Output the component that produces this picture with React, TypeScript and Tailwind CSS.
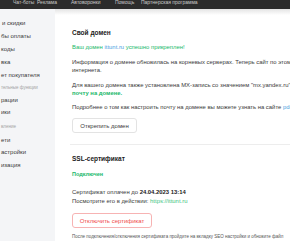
import React from 'react';

const topLinks = [
  { label: 'Чат-боты', w: 'w-[24px]' },
  { label: 'Реклама', w: 'w-[34px]' },
  { label: 'Автоворонки', w: 'w-[44px]' },
  { label: 'Помощь', w: 'w-[26px]' },
  { label: 'Партнерская программа', w: 'w-[80px]' },
];

// sidebar rows: fixed-height rows keep the rhythm of the scrolled menu
const SideItem: React.FC<{ label: string; h: string }> = ({ label, h }) => (
  <div className={`${h} flex items-center text-[6px] leading-[8px] text-[#3a3a3a] whitespace-nowrap`}>{label}</div>
);

const SideHeader: React.FC<{ label: string; h: string }> = ({ label, h }) => (
  <div className={`${h} flex items-center text-[4.5px] leading-[6px] text-[#a3a3a3] whitespace-nowrap`}>{label}</div>
);

export default function App() {
  return (
    <div className="w-[290px] h-[241px] overflow-hidden bg-white flex flex-col font-['Liberation_Sans',Arial,sans-serif]">
      {/* top nav, scrolled so only the bottom of it shows */}
      <div className="h-[9px] shrink-0 bg-[#2c2c2c] flex pl-[13px] overflow-hidden">
        {topLinks.map((l) => (
          <span key={l.label} className={`${l.w} shrink-0 -mt-[1px] text-[5px] leading-[6px] text-[#c9c9c9] whitespace-nowrap`}>
            {l.label}
          </span>
        ))}
      </div>

      <div className="flex flex-1 min-h-0">
        {/* sidebar */}
        <aside className="w-[55px] shrink-0 bg-[#f4f5f7] pl-[1px] overflow-hidden flex flex-col">
          <div className="h-[7px] shrink-0" />
          <SideItem label="и скидки" h="h-[13px] pl-[1px]" />
          <SideItem label="бы оплаты" h="h-[13px]" />
          <SideItem label="коды" h="h-[13px]" />
          <SideItem label="вка" h="h-[13px]" />
          <SideItem label="ет покупателя" h="h-[13px]" />
          <SideHeader label="тельные функции" h="h-[13px]" />
          <SideItem label="рации" h="h-[11px]" />
          <SideItem label="ики" h="h-[14px]" />
          <SideHeader label="вление" h="h-[16px]" />
          <SideItem label="ети" h="h-[10px]" />
          <SideItem label="астройки" h="h-[13px]" />
          <SideItem label="изация" h="h-[13px]" />
        </aside>

        {/* main */}
        <main className="flex-1 min-w-0 relative overflow-hidden">
          <div className="absolute top-0 left-0 right-0 h-[6px] bg-gradient-to-b from-[#e4e4e4] to-white" />
          <div className="relative w-[300px] pl-[17px] text-[5.9px] leading-[8px] text-[#3a3a3a] whitespace-nowrap">
            <h2 className="pt-[19px] text-[6.5px] leading-[9px] font-bold text-[#222]">Свой домен</h2>
            <p className="mt-[6px] text-[#20b86a]">
              Ваш домен <span className="text-[#4aa3df]">ittunt.ru</span> успешно прикреплен!
            </p>
            <p className="mt-[7px]">
              Информация о домене обновилась на корневых серверах. Теперь сайт по этому адресу
              <br />
              интернета.
            </p>
            <p className="mt-[7px]">
              Для вашего домена также установлена MX-запись со значением "mx.yandex.ru", теперь
              <br />
              <span className="font-bold text-[#20b86a]">почту на домене.</span>
            </p>
            <p className="mt-[6px]">
              Подробнее о том как настроить почту на домене вы можете узнать на сайте{' '}
              <span className="text-[#4aa3df]">pdd</span>
            </p>
            <button className="block mt-[7px] h-[15px] w-[65px] rounded-[3px] border border-[#e3e3e3] bg-white text-[6px] leading-none text-[#3a3a3a]">
              Открепить домен
            </button>

            <div className="mt-[11px] -ml-[2px] h-px bg-[#ededed]" />

            <h2 className="mt-[9px] text-[6.5px] leading-[9px] font-bold text-[#222]">SSL-сертификат</h2>
            <p className="mt-[7px] text-[5.5px] font-bold text-[#20b86a]">Подключен</p>
            <p className="mt-[10px] leading-[9px]">
              Сертификат оплачен до <span className="font-bold text-[#222]">24.04.2023 13:14</span>
              <br />
              Посмотрите его в действии: <span className="text-[#3cc57f]">https://ittunt.ru</span>
            </p>
            <button className="block mt-[7px] h-[15px] w-[80px] rounded-[3px] border border-[#f7b3b3] bg-white text-[6px] leading-none text-[#ef4b4b]">
              Отключить сертификат
            </button>
            <p className="mt-[6px] text-[4.5px] leading-[6px] text-[#555]">
              После подключения/отключения сертификата пройдите на вкладку SEO настройки и обновите файл
            </p>
          </div>
        </main>
      </div>
    </div>
  );
}
